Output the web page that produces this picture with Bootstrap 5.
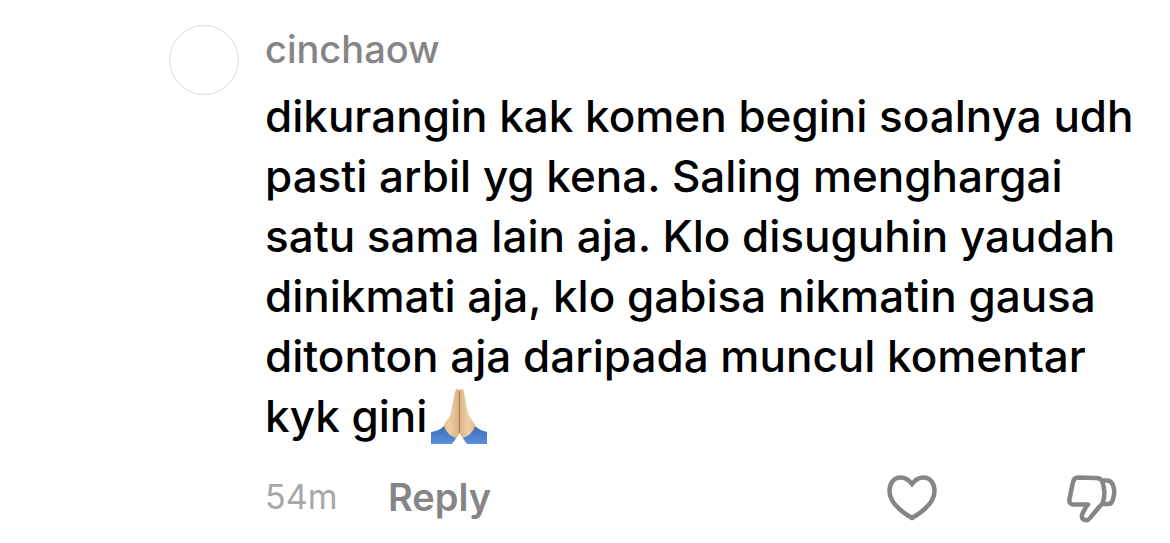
<!DOCTYPE html>
<html lang="id">
<head>
<meta charset="utf-8">
<meta name="viewport" content="width=device-width, initial-scale=1">
<title>Comment</title>
<link href="https://cdn.jsdelivr.net/npm/bootstrap@5.3.0/dist/css/bootstrap.min.css" rel="stylesheet">
<style>
  body { font-family: Inter, "Noto Sans", sans-serif; background: #fff; color: #000; }
  .comment-item { padding: 25px 28px 18px 169px; gap: 26px; }
  .avatar { width: 70px; height: 70px; border: 1px solid #dcdcdc; }
  .author, .reply-btn { font-size: 38px; line-height: 48px; font-weight: 500; color: #858585; }
  .reply-btn { font-weight: 600; }
  .comment-text { font-size: 44px; line-height: 60px; font-weight: 500; margin: 13px 0 25px; }
  .emoji { width: 56px; height: 56px; margin: -12px 0 -12px 4px; vertical-align: 0; }
  .time { font-size: 34px; line-height: 48px; color: #a8a8a8; width: 123px; }
  .reactions { gap: 130px; margin-right: 25px; padding-top: 4px; }
  .icon-btn svg { display: block; fill: none; stroke: #868686; stroke-width: 4.5; stroke-linejoin: round; }
</style>
</head>
<body>
<main>
  <article class="comment-item d-flex align-items-start">
    <a href="#" class="avatar rounded-circle flex-shrink-0" aria-label="cinchaow"></a>
    <div class="flex-grow-1">
      <a href="#" class="author d-block text-decoration-none">cinchaow</a>
      <p class="comment-text">dikurangin kak komen begini soalnya udh pasti arbil yg kena. Saling menghargai satu sama lain aja. Klo disuguhin yaudah dinikmati aja, klo gabisa nikmatin gausa ditonton aja daripada muncul komentar kyk gini<svg class="emoji" viewBox="0 0 56 56" role="img" aria-label="🙏🏼">
        <defs>
          <linearGradient id="skin"><stop offset="0" stop-color="#d9b385"/><stop offset=".45" stop-color="#efcfa5"/><stop offset="1" stop-color="#d9b083"/></linearGradient>
          <linearGradient id="sleeve" x2="0" y2="1"><stop offset="0" stop-color="#3c6cb8"/><stop offset="1" stop-color="#5b90df"/></linearGradient>
        </defs>
        <path fill="url(#skin)" d="M28.500 2C26 0 24.500 1 24 4L20.500 21C20 27 16 32 13 37L10 41L23 54L28.500 45Z"/>
        <path fill="url(#skin)" d="M28.500 2C31 0 32.500 1 33 4L36 21C37 27 41 32 44 37L47 41L34 54L28.500 45Z"/>
        <path fill="none" stroke="#a7794f" stroke-width="1" d="M28.500 3V45"/>
        <path fill="url(#sleeve)" d="M0 44Q7 43 13 38.500Q16 47 25 50L21 56H0Z"/>
        <path fill="url(#sleeve)" d="M56 44Q50 43 44 38.500Q41 47 32 50L36 56H56Z"/>
      </svg></p>
      <div class="d-flex align-items-center">
        <time class="time">54m</time>
        <button type="button" class="reply-btn btn p-0 border-0">Reply</button>
        <div class="reactions d-flex ms-auto">
          <button type="button" class="icon-btn btn p-0 border-0" aria-label="Like">
            <svg width="50" height="48" viewBox="0 0 50 48"><path d="M25 9C21 3.500 17 2.500 13.500 2.500C6.500 2.500 2.500 8.500 2.500 16C2.500 27 13 36 25 43C37 36 47.500 27 47.500 16C47.500 8.500 43.500 2.500 36.500 2.500C33 2.500 29 3.500 25 9Z" stroke-linejoin="miter"/></svg>
          </button>
          <button type="button" class="icon-btn btn p-0 border-0" aria-label="Dislike">
            <svg width="50" height="48" viewBox="0 0 50 48"><path d="M11 2.500L29 3Q34 3 35.500 7Q39 18 36 27Q35.500 29 33 31L23 43C20 47 14 45 15 40Q16 36 21 29.500H7Q1.500 29.500 2.500 24L6 7Q7 2.500 11 2.500ZM36 5.500H40Q44 5.500 46 10Q48.500 17 46 24Q45 29 41 29H36"/></svg>
          </button>
        </div>
      </div>
    </div>
  </article>
</main>
<script src="https://cdn.jsdelivr.net/npm/bootstrap@5.3.0/dist/js/bootstrap.bundle.min.js"></script>
</body>
</html>
